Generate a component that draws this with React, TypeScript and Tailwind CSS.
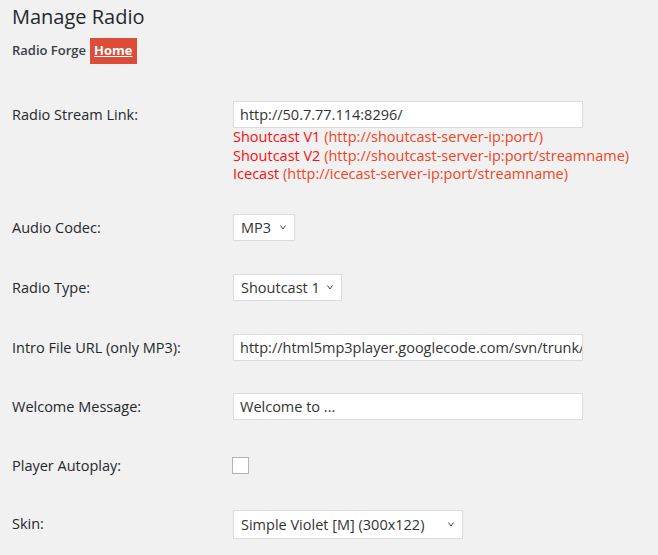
import React from 'react';

/**
 * Manage Radio — settings form
 */

const FONT = "font-['Open_Sans',_'Liberation_Sans',_sans-serif]";

function Chevron() {
  return (
    <svg width="6" height="5" viewBox="0 0 6 5" className="shrink-0">
      <path d="M0.5 0.5 L3 4 L5.5 0.5" fill="none" stroke="#444" strokeWidth="1" />
    </svg>
  );
}

function FakeSelect({ value, width, height = 'h-[27px]' }: { value: string; width: string; height?: string }) {
  return (
    <div
      className={`flex items-center justify-between pl-[7px] pr-[8px] bg-white border border-[#dcdcdc] text-[14.5px] text-[#333] ${height} ${width}`}
    >
      <span>{value}</span>
      <Chevron />
    </div>
  );
}

function TextInput({ value }: { value: string }) {
  return (
    <div className="h-[27px] w-[350px] flex items-center pl-[6px] bg-white border border-[#dcdcdc] text-[14.5px] text-[#333] overflow-hidden whitespace-nowrap">
      {value}
    </div>
  );
}

function Row({ label, children, className = '' }: { label: string; children: React.ReactNode; className?: string }) {
  return (
    <div className={`grid grid-cols-[221px_1fr] items-start ${className}`}>
      <div className="h-[27px] flex items-center text-[14.5px] text-[#23282d] whitespace-nowrap">{label}</div>
      <div>{children}</div>
    </div>
  );
}

const STREAM_HINTS = [
  { name: 'Shoutcast V1', url: '(http://shoutcast-server-ip:port/)' },
  { name: 'Shoutcast V2', url: '(http://shoutcast-server-ip:port/streamname)' },
  { name: 'Icecast', url: '(http://icecast-server-ip:port/streamname)' },
];

export default function App() {
  return (
    <div className={`${FONT} w-[658px] h-[555px] bg-[#f1f1f1] px-[12px] overflow-hidden`}>
      <h1 className="text-[20px] leading-[28px] font-normal text-[#23282d] pt-[3px]">Manage Radio</h1>
      <div className="flex items-center gap-[4px] mt-[7px]">
        <span className="text-[13px] font-semibold text-[#3a3f44]">Radio Forge</span>
        <a className="h-[26px] px-[4px] flex items-center bg-[#dd4b39] text-white text-[13px] font-bold underline">
          Home
        </a>
      </div>

      <div className="flex flex-col mt-[37px]">
        <Row label="Radio Stream Link:">
          <TextInput value="http://50.7.77.114:8296/" />
          <div className="h-[53px] text-[14.5px] leading-[18.5px] whitespace-nowrap">
            {STREAM_HINTS.map((h) => (
              <div key={h.name}>
                <span className="text-[#ff0d0d]">{h.name}</span>{' '}
                <span className="text-[#f2441f]">{h.url}</span>
              </div>
            ))}
          </div>
        </Row>

        <Row label="Audio Codec:" className="mt-[33px]">
          <FakeSelect value="MP3" width="w-[62px]" />
        </Row>

        <Row label="Radio Type:" className="mt-[33px]">
          <FakeSelect value="Shoutcast 1" width="w-[109px]" />
        </Row>

        <Row label="Intro File URL (only MP3):" className="mt-[33px]">
          <TextInput value="http://html5mp3player.googlecode.com/svn/trunk/" />
        </Row>

        <Row label="Welcome Message:" className="mt-[32px]">
          <TextInput value="Welcome to ..." />
        </Row>

        <Row label="Player Autoplay:" className="mt-[32px]">
          <div className="h-[27px] flex items-center">
            <div className="w-[17px] h-[17px] -ml-[1px] bg-white border border-[#b4b4b4]" />
          </div>
        </Row>

        <Row label="Skin:" className="mt-[31px]">
          <FakeSelect value="Simple Violet [M] (300x122)" width="w-[230px]" height="h-[29px]" />
        </Row>
      </div>
    </div>
  );
}
